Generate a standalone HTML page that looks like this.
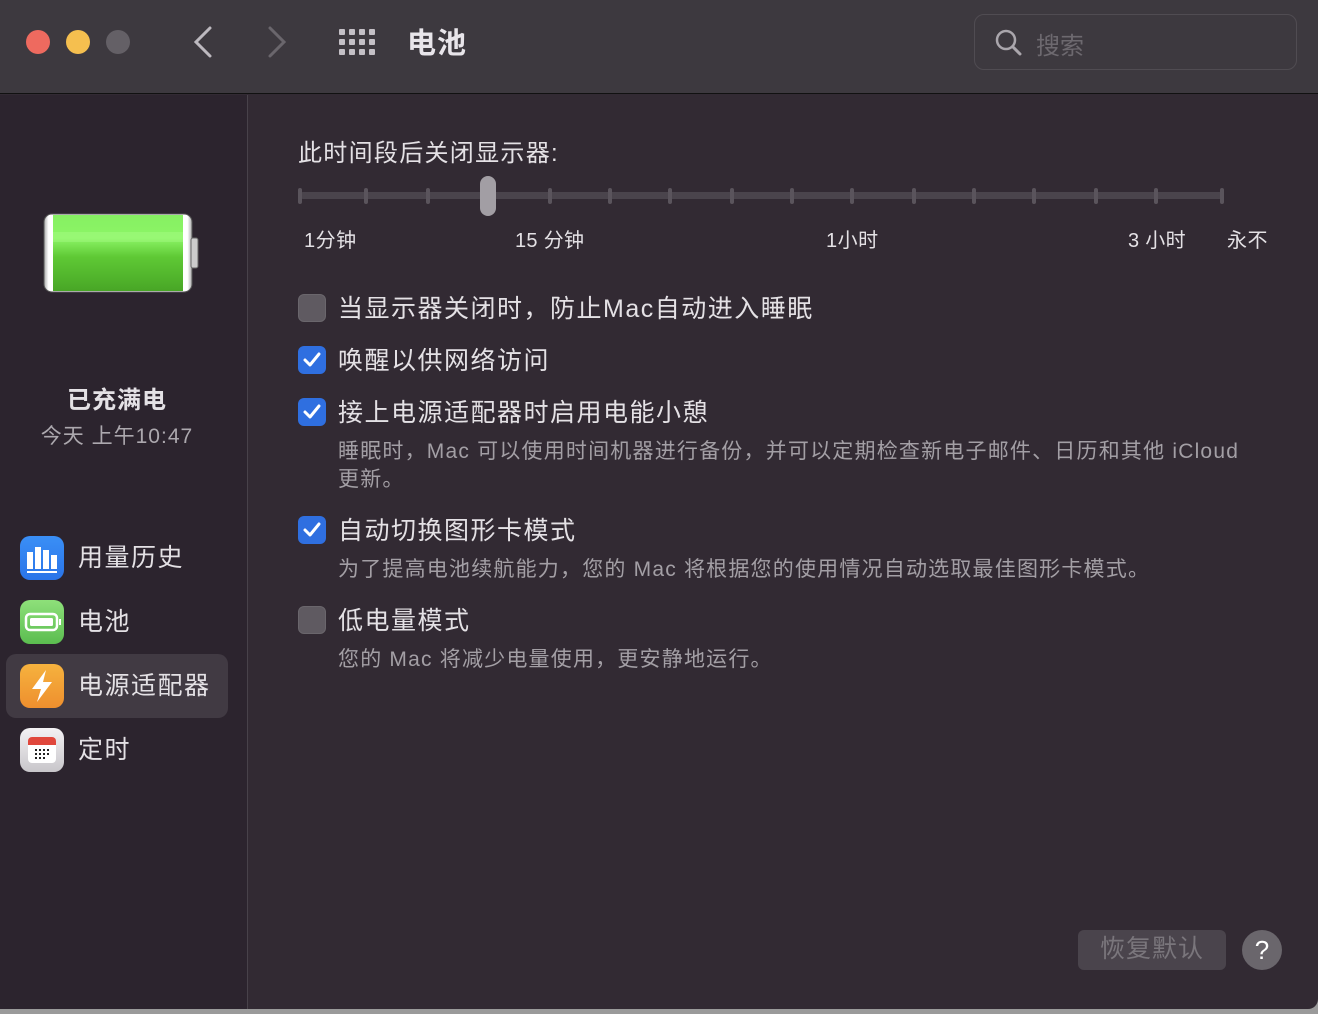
<!DOCTYPE html>
<html><head><meta charset="utf-8"><style>
*{margin:0;padding:0;box-sizing:border-box}
body{width:1318px;height:1014px;background:#9a9a9a;font-family:"Liberation Sans","Noto Sans CJK SC",sans-serif;position:relative;overflow:hidden}
.win{position:absolute;left:0;top:0;width:1318px;height:1009px;background:#322a33;border-radius:0 0 10px 0;overflow:hidden}
.tb{position:absolute;left:0;top:0;width:1318px;height:94px;background:#3d393f;border-bottom:1px solid #111}
.dot{position:absolute;top:30px;width:24px;height:24px;border-radius:50%}
.side{position:absolute;left:0;top:95px;width:248px;height:914px;background:#2c242e;border-right:1px solid #48424a}
.t{position:absolute;color:#e4e1e5;white-space:nowrap}
.lb{font-size:25px;letter-spacing:1.5px}
.cb{position:absolute;left:298px;width:28px;height:28px;border-radius:6px}
.off{background:#5f5a61;border:1px solid #6a666c}
.on{background:#2f6fe0}
.sub{position:absolute;left:338px;color:#a39fa5;font-size:21px;line-height:28px;letter-spacing:1.2px}
.ic{position:absolute;left:20px;width:44px;height:44px;border-radius:10px}
.tick{position:absolute;top:188px;width:4px;height:16px;background:#5a545c;border-radius:2px}
</style></head><body>
<div class="win">
<div class="tb">
 <div class="dot" style="left:26px;background:#ee6a5f"></div>
 <div class="dot" style="left:66px;background:#f5bf4f"></div>
 <div class="dot" style="left:106px;background:#646066"></div>
 <svg style="position:absolute;left:188px;top:24px" width="30" height="36"><path d="M22 4 L8 18 L22 32" stroke="#bdb9bf" stroke-width="3" fill="none" stroke-linecap="round"/></svg>
 <svg style="position:absolute;left:262px;top:24px" width="30" height="36"><path d="M8 4 L22 18 L8 32" stroke="#6a666c" stroke-width="3" fill="none" stroke-linecap="round"/></svg>
 <svg style="position:absolute;left:338px;top:28px" width="40" height="28" fill="#c4c0c6">
  <rect x="1" y="1" width="6" height="6" rx="1"/><rect x="11" y="1" width="6" height="6" rx="1"/><rect x="21" y="1" width="6" height="6" rx="1"/><rect x="31" y="1" width="6" height="6" rx="1"/>
  <rect x="1" y="11" width="6" height="6" rx="1"/><rect x="11" y="11" width="6" height="6" rx="1"/><rect x="21" y="11" width="6" height="6" rx="1"/><rect x="31" y="11" width="6" height="6" rx="1"/>
  <rect x="1" y="21" width="6" height="6" rx="1"/><rect x="11" y="21" width="6" height="6" rx="1"/><rect x="21" y="21" width="6" height="6" rx="1"/><rect x="31" y="21" width="6" height="6" rx="1"/></svg>
 <div class="t" style="left:407px;top:20px;font-size:29px;font-weight:bold;color:#e8e5ea;letter-spacing:1px">电池</div>
 <div style="position:absolute;left:974px;top:14px;width:323px;height:56px;border:1.5px solid #504c52;border-radius:10px;background:#3d393f"></div>
 <svg style="position:absolute;left:994px;top:28px" width="30" height="30"><circle cx="12" cy="12" r="9" stroke="#aaa6ac" stroke-width="2.5" fill="none"/><path d="M19 19 L26 26" stroke="#aaa6ac" stroke-width="3" stroke-linecap="round"/></svg>
 <div class="t" style="left:1036px;top:26px;font-size:24px;color:#6d696f">搜索</div>
</div>
<div class="side">
 <svg style="position:absolute;left:42px;top:117px" width="160" height="82">
  <defs><linearGradient id="g" x1="0" y1="0" x2="0" y2="1"><stop offset="0" stop-color="#86f062"/><stop offset=".3" stop-color="#8cf566"/><stop offset=".55" stop-color="#5fc935"/><stop offset="1" stop-color="#48a626"/></linearGradient>
  <linearGradient id="w" x1="0" y1="0" x2="1" y2="0"><stop offset="0" stop-color="#aaa"/><stop offset=".03" stop-color="#fff"/><stop offset=".97" stop-color="#fff"/><stop offset="1" stop-color="#aaa"/></linearGradient></defs>
  <rect x="2" y="2" width="148" height="78" rx="8" fill="url(#w)" stroke="#555" stroke-width="1"/>
  <rect x="11" y="3" width="130" height="76" fill="url(#g)"/>
  <rect x="11" y="20" width="130" height="10" fill="#b0ff90" opacity=".35"/>
  <rect x="149" y="26" width="7" height="30" rx="2" fill="#ccc" stroke="#666"/>
 </svg>
 <div class="t" style="left:0;width:234px;text-align:center;top:285px;font-size:24px;font-weight:bold;letter-spacing:1px">已充满电</div>
 <div class="t" style="left:0;width:234px;text-align:center;top:325px;font-size:21px;color:#aca8ae;letter-spacing:1px">今天 上午10:47</div>
 <div class="ic" style="top:441px;background:linear-gradient(#3a8ff6,#2a74e8)"><svg width="44" height="44" fill="#fff"><rect x="7" y="16" width="6" height="17"/><rect x="15" y="11" width="6" height="22"/><rect x="23" y="14" width="6" height="19"/><rect x="31" y="19" width="6" height="14"/><rect x="7" y="35" width="30" height="2"/></svg></div>
 <div class="t" style="left:78px;top:443px;font-size:25px;letter-spacing:1.5px">用量历史</div>
 <div class="ic" style="top:505px;background:linear-gradient(#8ee07a,#5bbd50)"><svg width="44" height="44"><rect x="6" y="14" width="31" height="16" rx="4" fill="none" stroke="#fff" stroke-width="2.5"/><rect x="10" y="18" width="23" height="8" rx="1.5" fill="#fff"/><rect x="39" y="19" width="2" height="6" fill="#fff"/></svg></div>
 <div class="t" style="left:78px;top:507px;font-size:25px;letter-spacing:1.5px">电池</div>
 <div style="position:absolute;left:6px;top:559px;width:222px;height:64px;border-radius:10px;background:#413a43"></div>
 <div class="ic" style="top:569px;background:linear-gradient(#f6b23e,#ee8f2e)"><svg width="44" height="44"><path d="M26 6 L12 25 L21 25 L17 38 L32 18 L23 18 Z" fill="#fff"/></svg></div>
 <div class="t" style="left:78px;top:571px;font-size:25px;letter-spacing:1.5px">电源适配器</div>
 <div class="ic" style="top:633px;background:linear-gradient(#f4f2f4,#c8c6ca)"><svg width="44" height="44"><rect x="8" y="9" width="28" height="26" rx="4" fill="#fff"/><path d="M8 13 a4 4 0 0 1 4 -4 h20 a4 4 0 0 1 4 4 v4 h-28z" fill="#e0473c"/><g fill="#222"><rect x="15" y="21" width="2" height="2"/><rect x="19" y="21" width="2" height="2"/><rect x="23" y="21" width="2" height="2"/><rect x="27" y="21" width="2" height="2"/><rect x="15" y="25" width="2" height="2"/><rect x="19" y="25" width="2" height="2"/><rect x="23" y="25" width="2" height="2"/><rect x="27" y="25" width="2" height="2"/><rect x="15" y="29" width="2" height="2"/><rect x="19" y="29" width="2" height="2"/><rect x="23" y="29" width="2" height="2"/></g></svg></div>
 <div class="t" style="left:78px;top:635px;font-size:25px;letter-spacing:1.5px">定时</div>
</div>

<div class="t" style="left:298px;top:133px;font-size:24px;letter-spacing:1.3px">此时间段后关闭显示器:</div>
<div style="position:absolute;left:300px;top:192px;width:924px;height:7px;background:#4a444c;border-radius:3px"></div>
<div class="tick" style="left:298px"></div><div class="tick" style="left:364px"></div><div class="tick" style="left:426px"></div>
<div class="tick" style="left:548px"></div><div class="tick" style="left:608px"></div><div class="tick" style="left:668px"></div>
<div class="tick" style="left:730px"></div><div class="tick" style="left:790px"></div><div class="tick" style="left:850px"></div>
<div class="tick" style="left:912px"></div><div class="tick" style="left:972px"></div><div class="tick" style="left:1032px"></div>
<div class="tick" style="left:1094px"></div><div class="tick" style="left:1154px"></div><div class="tick" style="left:1220px"></div>
<div style="position:absolute;left:480px;top:176px;width:16px;height:40px;border-radius:8px;background:#a29ea4"></div>
<div class="t" style="left:304px;top:224px;font-size:20px;letter-spacing:.5px">1分钟</div>
<div class="t" style="left:515px;top:224px;font-size:20px;letter-spacing:.3px">15 分钟</div>
<div class="t" style="left:826px;top:224px;font-size:20px;letter-spacing:.5px">1小时</div>
<div class="t" style="left:1128px;top:224px;font-size:20px;letter-spacing:.3px">3 小时</div>
<div class="t" style="left:1227px;top:224px;font-size:20px;letter-spacing:.5px">永不</div>

<div class="cb off" style="top:294px"></div>
<div class="t lb" style="left:338px;top:289px">当显示器关闭时，防止Mac自动进入睡眠</div>
<div class="cb on" style="top:346px"><svg width="28" height="28"><path d="M7 14 L12 19 L21 8" stroke="#fff" stroke-width="3" fill="none" stroke-linecap="round" stroke-linejoin="round"/></svg></div>
<div class="t lb" style="left:338px;top:341px">唤醒以供网络访问</div>
<div class="cb on" style="top:398px"><svg width="28" height="28"><path d="M7 14 L12 19 L21 8" stroke="#fff" stroke-width="3" fill="none" stroke-linecap="round" stroke-linejoin="round"/></svg></div>
<div class="t lb" style="left:338px;top:393px">接上电源适配器时启用电能小憩</div>
<div class="sub" style="top:438px;width:905px">睡眠时，Mac 可以使用时间机器进行备份，并可以定期检查新电子邮件、日历和其他 iCloud 更新。</div>
<div class="cb on" style="top:516px"><svg width="28" height="28"><path d="M7 14 L12 19 L21 8" stroke="#fff" stroke-width="3" fill="none" stroke-linecap="round" stroke-linejoin="round"/></svg></div>
<div class="t lb" style="left:338px;top:511px">自动切换图形卡模式</div>
<div class="sub" style="top:556px">为了提高电池续航能力，您的 Mac 将根据您的使用情况自动选取最佳图形卡模式。</div>
<div class="cb off" style="top:606px"></div>
<div class="t lb" style="left:338px;top:601px">低电量模式</div>
<div class="sub" style="top:646px">您的 Mac 将减少电量使用，更安静地运行。</div>

<div style="position:absolute;left:1078px;top:930px;width:148px;height:40px;border-radius:6px;background:#4a444c;color:#7a767c;font-size:25px;text-align:center;line-height:38px;letter-spacing:1px">恢复默认</div>
<div style="position:absolute;left:1242px;top:930px;width:40px;height:40px;border-radius:50%;background:#6a666c;color:#fff;font-size:26px;text-align:center;line-height:40px">?</div>
</div>
</body></html>
